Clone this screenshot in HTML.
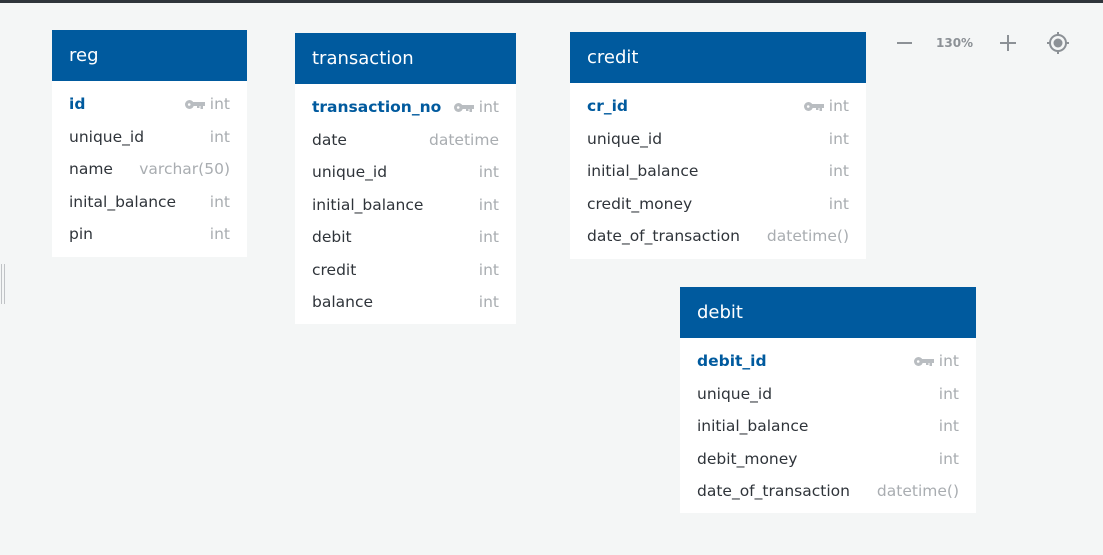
<!DOCTYPE html>
<html><head><meta charset="utf-8"><style>
*{margin:0;padding:0;box-sizing:border-box}
body{width:1103px;height:555px;background:#f4f6f6;position:relative;overflow:hidden;font-family:"DejaVu Sans","Liberation Sans",sans-serif}
.top{position:absolute;left:0;top:0;width:1103px;height:3px;background:#2f353b}
.t{position:absolute;background:#fff}
.h{background:#005a9e;color:#fff;font-size:18px;height:51px;line-height:52px;padding-left:17px}
.b{padding:7px 17px 7px 17px}
.r{height:32.5px;display:flex;align-items:center;justify-content:space-between;font-size:15.5px;color:#2f343a}
.r .ty{color:#a9adb1;display:flex;align-items:center}
.r.pk .n{color:#005a9e;font-weight:bold}
.key{margin-right:5px}
.ctl{position:absolute;top:33px;color:#8c9196}
</style></head><body>
<div class="top"></div>
<div style="position:absolute;left:1px;top:264px;width:1px;height:40px;background:#c0c3c6"></div>
<div style="position:absolute;left:4px;top:264px;width:1px;height:40px;background:#c0c3c6"></div>

<svg width="0" height="0" style="position:absolute"><defs><symbol id="k" viewBox="0 0 20 9"><circle cx="4.5" cy="4.5" r="4.5" fill="#b9bdc1"/><circle cx="4.2" cy="4.5" r="1.3" fill="#fff"/><path d="M8 2h12v4h-2v3h-2.5v-3h-1v2h-2.5v-2h-4z" fill="#b9bdc1"/></symbol></defs></svg>

<div class="t" style="left:52px;top:30px;width:195px;height:227px">
<div class="h">reg</div><div class="b">
<div class="r pk"><span class="n">id</span><span class="ty"><svg class="key" width="20" height="9"><use href="#k"/></svg>int</span></div>
<div class="r"><span>unique_id</span><span class="ty">int</span></div>
<div class="r"><span>name</span><span class="ty">varchar(50)</span></div>
<div class="r"><span>inital_balance</span><span class="ty">int</span></div>
<div class="r"><span>pin</span><span class="ty">int</span></div>
</div></div>

<div class="t" style="left:295px;top:33px;width:221px;height:291px">
<div class="h">transaction</div><div class="b">
<div class="r pk"><span class="n">transaction_no</span><span class="ty"><svg class="key" width="20" height="9"><use href="#k"/></svg>int</span></div>
<div class="r"><span>date</span><span class="ty">datetime</span></div>
<div class="r"><span>unique_id</span><span class="ty">int</span></div>
<div class="r"><span>initial_balance</span><span class="ty">int</span></div>
<div class="r"><span>debit</span><span class="ty">int</span></div>
<div class="r"><span>credit</span><span class="ty">int</span></div>
<div class="r"><span>balance</span><span class="ty">int</span></div>
</div></div>

<div class="t" style="left:570px;top:32px;width:296px;height:227px">
<div class="h">credit</div><div class="b">
<div class="r pk"><span class="n">cr_id</span><span class="ty"><svg class="key" width="20" height="9"><use href="#k"/></svg>int</span></div>
<div class="r"><span>unique_id</span><span class="ty">int</span></div>
<div class="r"><span>initial_balance</span><span class="ty">int</span></div>
<div class="r"><span>credit_money</span><span class="ty">int</span></div>
<div class="r"><span>date_of_transaction</span><span class="ty">datetime()</span></div>
</div></div>

<div class="t" style="left:680px;top:287px;width:296px;height:226px">
<div class="h">debit</div><div class="b">
<div class="r pk"><span class="n">debit_id</span><span class="ty"><svg class="key" width="20" height="9"><use href="#k"/></svg>int</span></div>
<div class="r"><span>unique_id</span><span class="ty">int</span></div>
<div class="r"><span>initial_balance</span><span class="ty">int</span></div>
<div class="r"><span>debit_money</span><span class="ty">int</span></div>
<div class="r"><span>date_of_transaction</span><span class="ty">datetime()</span></div>
</div></div>

<div style="position:absolute;left:897px;top:42px;width:15px;height:2px;background:#8c9196"></div>
<div class="ctl" style="left:936px;top:36px;font-size:12px;font-weight:bold">130%</div>
<div style="position:absolute;left:1000px;top:42px;width:16px;height:2px;background:#8c9196"></div>
<div style="position:absolute;left:1007px;top:35px;width:2px;height:16px;background:#8c9196"></div>
<svg style="position:absolute;left:1046px;top:31px" width="24" height="24" viewBox="0 0 24 24"><circle cx="12" cy="12" r="8" fill="none" stroke="#8c9196" stroke-width="2"/><circle cx="12" cy="12" r="4.5" fill="#8c9196"/><path d="M12 1v4M12 19v4M1 12h4M19 12h4" stroke="#8c9196" stroke-width="2"/></svg>
</body></html>
